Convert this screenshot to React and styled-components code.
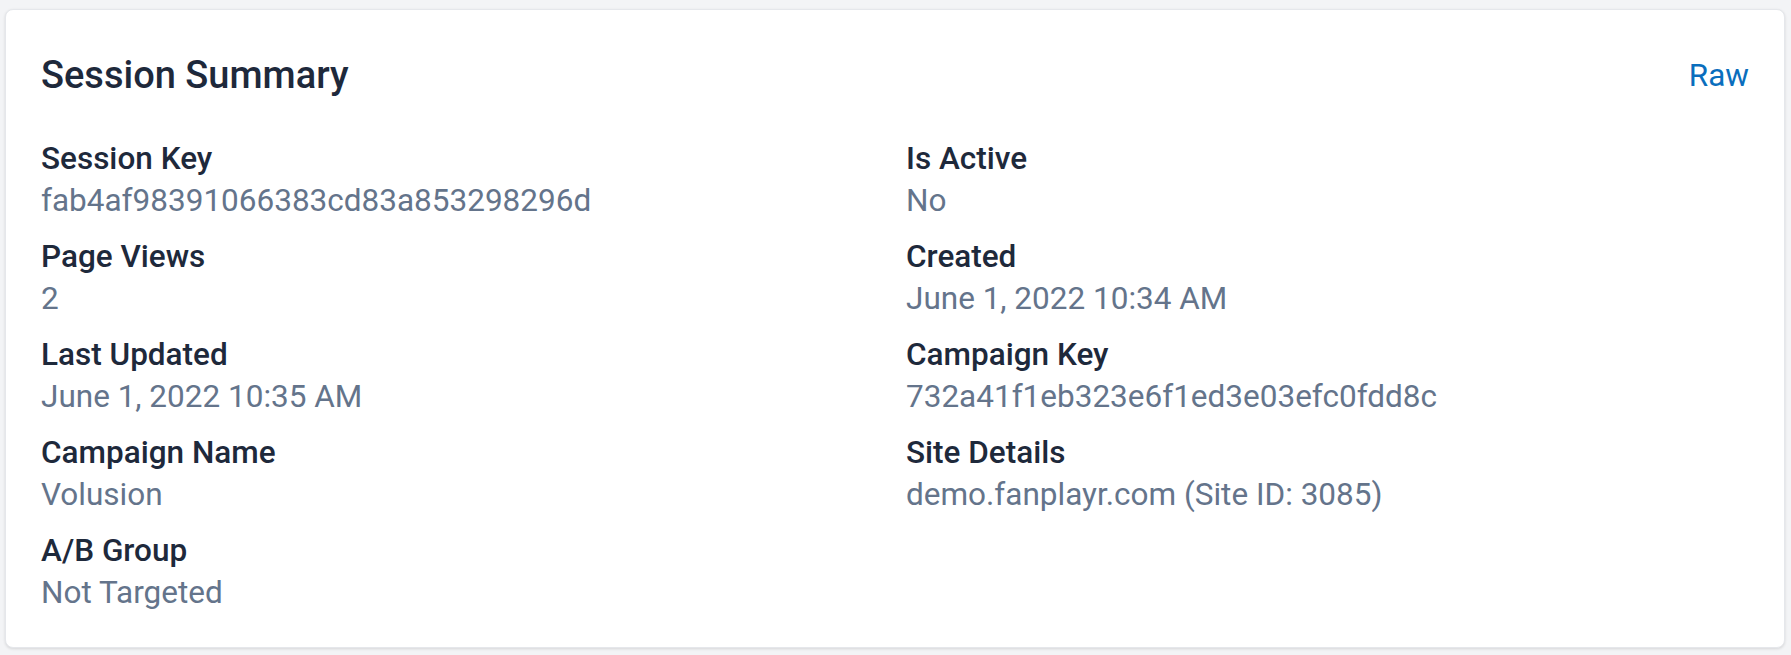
import { createGlobalStyle, styled } from "styled-components";

const GlobalStyle = createGlobalStyle`
  html, body {
    margin: 0;
    background: #f3f4f6;
  }
  body {
    font-family: Roboto, "Liberation Sans", sans-serif;
  }
`;

const Page = styled.div`
  padding: 9px 6px 7px 5px;
`;

const Card = styled.section`
  box-sizing: border-box;
  height: 639px;
  padding: 36px 35px 0 35px;
  background: #fff;
  border: 1px solid #e5e7eb;
  border-radius: 8px;
  box-shadow: 0 1px 3px rgba(0, 0, 0, 0.12);
`;

const Header = styled.header`
  display: flex;
  justify-content: space-between;
  align-items: center;
  height: 58px;
  margin-bottom: 34px;
`;

const Title = styled.h2`
  margin: 0;
  font-size: 38px;
  font-weight: 500;
  color: #1e293b;
`;

const RawLink = styled.a`
  font-size: 31.5px;
  color: #0a6ebd;
  text-decoration: none;
  cursor: pointer;
`;

const Grid = styled.dl`
  display: grid;
  grid-template-columns: 1fr 1fr;
  column-gap: 22px;
  row-gap: 14px;
  margin: 0;
`;

const Field = styled.div`
  line-height: 42px;
`;

const Label = styled.dt`
  font-size: 31.5px;
  font-weight: 500;
  color: #1e293b;
`;

const Value = styled.dd`
  margin: 0;
  font-size: 31.5px;
  color: #64748b;
`;

const fields = [
  ["Session Key", "fab4af98391066383cd83a853298296d"],
  ["Is Active", "No"],
  ["Page Views", "2"],
  ["Created", "June 1, 2022 10:34 AM"],
  ["Last Updated", "June 1, 2022 10:35 AM"],
  ["Campaign Key", "732a41f1eb323e6f1ed3e03efc0fdd8c"],
  ["Campaign Name", "Volusion"],
  ["Site Details", "demo.fanplayr.com (Site ID: 3085)"],
  ["A/B Group", "Not Targeted"],
];

export default function App() {
  return (
    <>
      <GlobalStyle />
      <Page>
        <Card>
          <Header>
            <Title>Session Summary</Title>
            <RawLink>Raw</RawLink>
          </Header>
          <Grid>
            {fields.map(([label, value]) => (
              <Field key={label}>
                <Label>{label}</Label>
                <Value>{value}</Value>
              </Field>
            ))}
          </Grid>
        </Card>
      </Page>
    </>
  );
}
